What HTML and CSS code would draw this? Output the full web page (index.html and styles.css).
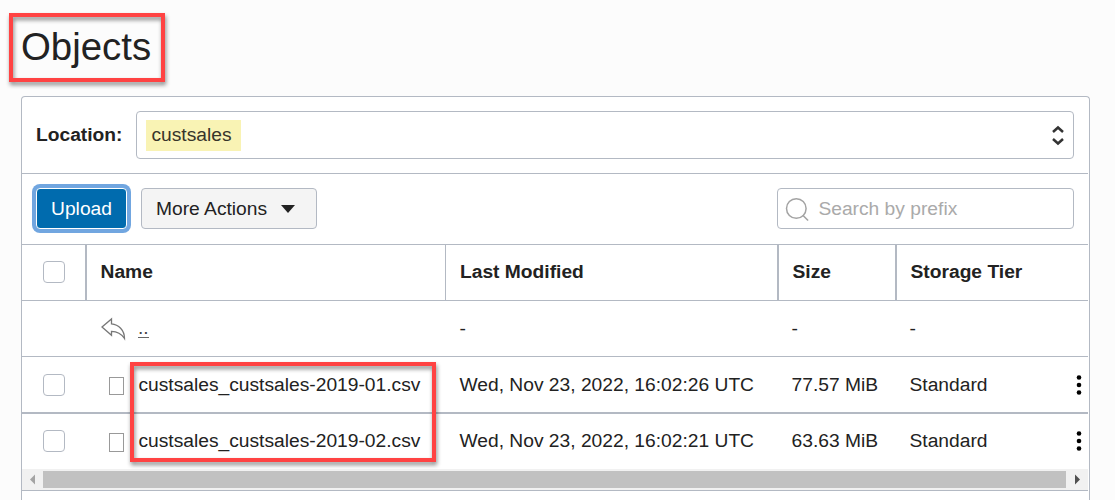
FILE: index.html
```html
<!DOCTYPE html>
<html lang="en">
<head>
<meta charset="utf-8">
<title>Objects</title>
<link rel="stylesheet" href="styles.css">
</head>
<body>
<h1 class="title">Objects</h1>
<main class="panel">
  <div class="location">
    <label class="location-label">Location:</label>
    <div class="select">
      <span class="highlight">custsales</span>
      <svg class="sort" width="14" height="22" viewBox="0 0 14 22"><path d="M2 8 7 3.500l5 4.500M2 15l5 4.500 5-4.500" fill="none" stroke="#333" stroke-width="2.500"/></svg>
    </div>
  </div>
  <div class="toolbar">
    <button class="btn upload">Upload</button>
    <button class="btn more">More Actions <svg width="14" height="8" viewBox="0 0 14 8"><path d="M0 0h14L7 8z" fill="#222"/></svg></button>
    <div class="search">
      <svg width="24" height="26" viewBox="0 0 24 26"><circle cx="11.300" cy="12.500" r="9.800" fill="none" stroke="#a3a3a3" stroke-width="1.500"/><path d="M17.800 19.300l5.300 5.200" stroke="#a3a3a3" stroke-width="1.600"/></svg>
      <span>Search by prefix</span>
    </div>
  </div>
  <div class="row head">
    <div class="cell pick"><span class="check"></span></div>
    <div class="cell">Name</div>
    <div class="cell thin">Last Modified</div>
    <div class="cell">Size</div>
    <div class="cell">Storage Tier</div>
  </div>
  <div class="row">
    <div class="cell pick"></div>
    <div class="cell name"><svg class="back" width="26" height="24" viewBox="0 0 26 24"><path d="M1 10 10.500 2v4.800C17.500 7.500 23.500 13 23.500 21.500 20.500 16.800 17 14.300 10.500 14.300v4z" fill="none" stroke="#777" stroke-width="1.300"/></svg><a class="up">..</a></div>
    <div class="cell">-</div>
    <div class="cell">-</div>
    <div class="cell">-</div>
  </div>
  <div class="row">
    <div class="cell pick"><span class="check"></span></div>
    <div class="cell name"><span class="file"></span>custsales_custsales-2019-01.csv</div>
    <div class="cell">Wed, Nov 23, 2022, 16:02:26 UTC</div>
    <div class="cell">77.57 MiB</div>
    <div class="cell last">Standard<svg width="6" height="20" viewBox="0 0 6 20"><circle cx="3" cy="2.500" r="2.300"/><circle cx="3" cy="10" r="2.300"/><circle cx="3" cy="17.500" r="2.300"/></svg></div>
  </div>
  <div class="row final">
    <div class="cell pick"><span class="check"></span></div>
    <div class="cell name"><span class="file"></span>custsales_custsales-2019-02.csv</div>
    <div class="cell">Wed, Nov 23, 2022, 16:02:21 UTC</div>
    <div class="cell">63.63 MiB</div>
    <div class="cell last">Standard<svg width="6" height="20" viewBox="0 0 6 20"><circle cx="3" cy="2.500" r="2.300"/><circle cx="3" cy="10" r="2.300"/><circle cx="3" cy="17.500" r="2.300"/></svg></div>
  </div>
  <div class="scrollbar">
    <svg width="21" height="21" viewBox="0 0 21 21"><path d="M13 5.500v10l-5-5z" fill="#a3a3a3"/></svg>
    <div class="thumb"></div>
    <svg width="22" height="21" viewBox="0 0 22 21"><path d="M9 5.500v10l5-5z" fill="#505050"/></svg>
  </div>
</main>
<div class="frame frame-title"></div>
<div class="frame frame-files"></div>
</body>
</html>
```
FILE: styles.css
```css
* { box-sizing: border-box; }
body {
  margin: 0;
  height: 500px;
  overflow: hidden;
  background: #fcfcfc;
  color: #222;
  font: 19.23px/22px "Liberation Sans", Arial, sans-serif;
}
svg { display: block; flex: none; }
.title {
  margin: 0;
  height: 96px;
  padding: 24px 0 0 21px;
  font-size: 38.4px;
  line-height: 46px;
  font-weight: 400;
}
.panel {
  width: 1069px;
  height: 404px;
  margin-left: 21px;
  padding-right: 1px;
  background: #fff;
  border: 1px solid #b3b9c3;
  border-bottom: 0;
  border-radius: 4px 4px 0 0;
}
.location {
  display: flex;
  align-items: center;
  height: 77px;
  padding: 0 14px;
  border-bottom: 1px solid #b3b9c3;
}
.location-label { width: 100px; font-weight: 700; }
.select {
  display: flex;
  align-items: center;
  justify-content: space-between;
  width: 938px;
  height: 48px;
  padding: 0 8px 0 9px;
  border: 1px solid #b3b9c3;
  border-radius: 4px;
}
.highlight {
  width: 95px;
  height: 31px;
  padding-left: 5.4px;
  line-height: 29px;
  background: #f9f3b4;
  color: #37352b;
}
.toolbar {
  display: flex;
  align-items: flex-start;
  height: 71px;
  padding: 14px 14px 0;
  border-bottom: 1px solid #b3b9c3;
}
.btn {
  height: 41px;
  padding: 0;
  border: 1px solid #b3b9c3;
  border-radius: 4px;
  font: inherit;
}
.upload {
  width: 91px;
  background: #006bae;
  border-color: #fff;
  color: #fff;
  box-shadow: 0 0 0 4px #71a6e0;
}
.more {
  display: flex;
  align-items: center;
  gap: 14px;
  width: 176px;
  margin-left: 14px;
  padding-left: 14px;
  background: #f4f4f4;
  color: #222;
}
.search {
  display: flex;
  align-items: center;
  gap: 9px;
  width: 297px;
  height: 41px;
  margin-left: auto;
  padding-left: 7.4px;
  border: 1px solid #b3b9c3;
  border-radius: 4px;
  color: #aaa;
}
.row {
  display: grid;
  grid-template-columns: 63px 360px 332px 118px 193px;
  height: 56px;
  border-bottom: 1px solid #b3b9c3;
}
.cell {
  display: flex;
  align-items: center;
  padding-left: 14.5px;
}
.cell.pick { padding-left: 21px; }
.head .cell {
  padding: 0 0 2px 13.5px;
  border-left: 2px solid #b3b9c3;
  font-weight: 700;
}
.head .cell.thin { padding-left: 14px; border-left-width: 1px; }
.head .cell.pick { padding: 0 0 1px 21px; border: 0; }
.check {
  width: 22px;
  height: 22px;
  border: 1px solid #b3b9c3;
  border-radius: 4px;
}
.back { margin: 0 11px 0 1px; }
.cell.name { padding-left: 15px; }
.up { border-bottom: 1px solid #666; line-height: 18px; color: #444; }
.file {
  width: 15px;
  height: 18px;
  margin: 3px 14.4px 0 9px;
  border: 1px solid #999;
}
.last { justify-content: space-between; padding-right: 6.5px; }
.final {
  padding-bottom: 2px;
  border-top: 1px solid #b3b9c3;
  border-bottom: 0;
}
.final .file { height: 19px; }
.scrollbar {
  display: flex;
  height: 22px;
  background: #f1f1f1;
  border-bottom: 1px solid #b3b9c3;
}
.thumb { flex: 1; height: 17px; margin-top: 2px; background: #c1c1c1; }
.frame {
  position: absolute;
  border: 4px solid #ff4343;
  filter: drop-shadow(1px 3px 2px rgba(0, 0, 0, .45));
}
.frame-title { left: 9px; top: 13px; width: 156px; height: 69px; }
.frame-files { left: 130px; top: 362px; width: 306px; height: 100px; }
```
